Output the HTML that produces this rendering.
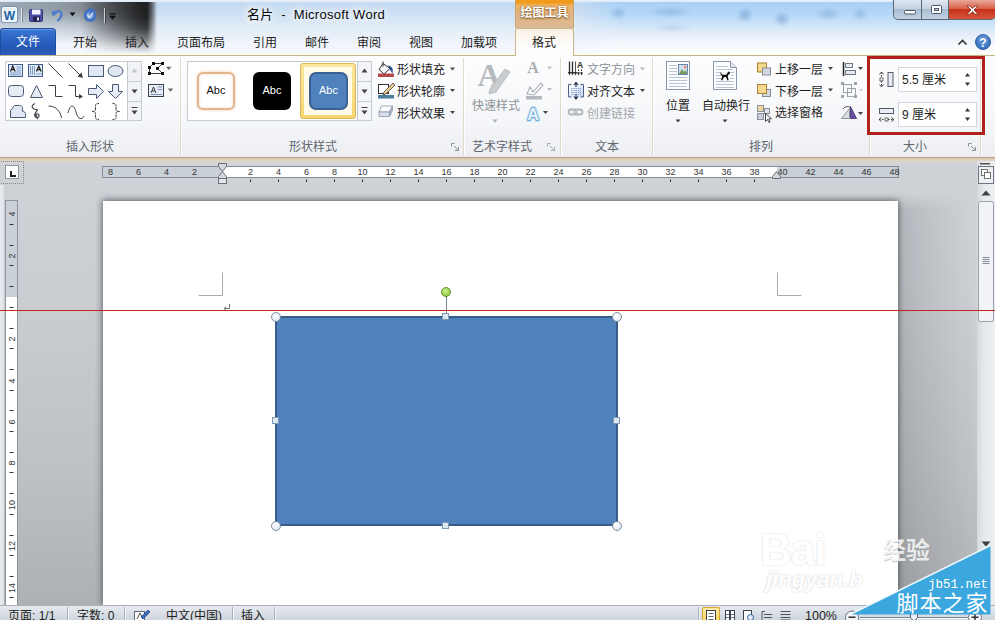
<!DOCTYPE html>
<html lang="zh-CN">
<head>
<meta charset="utf-8">
<title>名片 - Microsoft Word</title>
<style>
*{box-sizing:border-box;margin:0;padding:0}
html,body{width:995px;height:620px;overflow:hidden;background:#c9cdd2}
body{position:relative;font-family:"Liberation Sans","Noto Sans CJK SC",sans-serif;font-size:12px;color:#1e1e1e}
.abs{position:absolute}
/* ---------- title bar ---------- */
#title{left:0;top:0;width:995px;height:55px;background:linear-gradient(180deg,#eaf2fb 0px,#dbe8f6 2px,#c3d9f1 3px,#cfe1f4 14px,#e2ecf8 28px,#eff4fa 42px,#f8fafd 55px)}
#titletext{left:216px;top:4px;width:200px;text-align:center;font-size:13px;color:#0a0a0a;white-space:pre;letter-spacing:.3px;text-shadow:0 0 6px #fff,0 0 10px #fff,0 0 14px #fff}
/* ---------- tab row ---------- */
#tabs{left:560px;top:2px;width:435px;height:52px;background:radial-gradient(ellipse 9px 7px at 58px 11px,rgba(80,130,190,.35),transparent),radial-gradient(ellipse 22px 6px at 110px 10px,rgba(80,130,190,.3),transparent),radial-gradient(ellipse 22px 5px at 112px 26px,rgba(120,160,210,.22),transparent),radial-gradient(ellipse 9px 8px at 185px 13px,rgba(70,120,185,.38),transparent),radial-gradient(ellipse 9px 8px at 222px 17px,rgba(70,120,185,.38),transparent),radial-gradient(ellipse 14px 7px at 268px 12px,rgba(80,130,190,.3),transparent),radial-gradient(ellipse 8px 7px at 300px 12px,rgba(80,130,190,.3),transparent),linear-gradient(180deg,#a7d0f7 0,#b2d6f6 10px,#cbe2f7 22px,#e4eefa 32px,#f5f9fd 43px,#fff 52px);-webkit-mask-image:linear-gradient(90deg,transparent 14px,#000 60px);mask-image:linear-gradient(90deg,transparent 14px,#000 60px)}
.tab{top:33px;font-size:12px;color:#222;white-space:nowrap}
#file{left:0;top:28px;width:56px;height:27px;z-index:2;background:linear-gradient(180deg,#3b78d6 0%,#2c64c4 40%,#2557b3 75%,#2a5fbc 100%);border-radius:3px 4px 0 0;color:#fff;text-align:center;line-height:27px;font-size:12px;border:1px solid #1f4f9f;border-bottom:none;box-shadow:inset 0 1px 0 rgba(255,255,255,.25)}

/* title details */
#darkblob{left:0;top:2px;width:158px;height:42px;background:linear-gradient(90deg,rgba(122,128,132,.55) 0,rgba(120,125,129,.68) 60px,rgba(110,114,117,.85) 100px,rgba(100,104,107,.9) 140px,rgba(100,104,107,.5) 151px,rgba(100,104,107,0) 157px);-webkit-mask-image:linear-gradient(180deg,#000 0,#000 18%,rgba(0,0,0,.38) 60%,transparent 100%);mask-image:linear-gradient(180deg,#000 0,#000 18%,rgba(0,0,0,.38) 60%,transparent 100%)}
#darkblob2{left:80px;top:2px;width:78px;height:52px;background:linear-gradient(90deg,rgba(28,28,29,0) 0,rgba(28,28,29,.5) 32px,rgba(28,28,29,.88) 58px,rgba(24,24,25,.95) 67px,rgba(24,24,25,.55) 71px,rgba(24,24,25,0) 77px);-webkit-mask-image:linear-gradient(180deg,#000 0,#000 28%,rgba(0,0,0,.85) 50%,rgba(0,0,0,.5) 75%,transparent 100%);mask-image:linear-gradient(180deg,#000 0,#000 28%,rgba(0,0,0,.85) 50%,rgba(0,0,0,.5) 75%,transparent 100%)}
#winbtns{left:893px;top:0;width:103px;height:20px;border:1px solid #5a6774;border-top:none;border-radius:0 0 5px 5px;overflow:hidden;background:linear-gradient(180deg,#dfe8f2 0%,#c5d3e2 45%,#a9bcd1 50%,#c3d3e4 100%)}
#winbtns .b{position:absolute;top:0;height:19px;border-right:1px solid #5a6774}
#closebtn{left:55px;width:48px;background:linear-gradient(180deg,#e9a99a 0%,#d9604a 45%,#c7311a 50%,#d8543c 100%);border-right:none}
#ctx{left:515px;top:0;width:59px;height:28px;background:linear-gradient(180deg,#f29a1a 0,#f29a1a 3px,#eeb160 5px,#e2b483 45%,#dcb995 100%);border-left:1px solid #c9a66b;border-right:1px solid #c9a66b;color:#fff;font-size:12px;font-weight:bold;text-align:center;line-height:27px;text-shadow:0 1px 2px #7a5626,0 0 2px #9a6a2a}
#fmt{left:515px;top:28px;width:59px;height:28px;z-index:2;background:linear-gradient(180deg,#fbf1e2 0%,#fdf9f2 35%,#fefefe 70%,#fdfdfe 100%);border:1px solid #c9b68d;border-bottom:none;border-radius:3px 3px 0 0}
/* ---------- ribbon ---------- */
#ribbon{left:0;top:55px;width:995px;height:103px;background:linear-gradient(180deg,#fdfdfe 0%,#f8f9fb 45%,#f1f3f6 80%,#eceef1 100%);border-top:1px solid #c2b691;border-bottom:1px solid #b8a07c;box-shadow:0 -1px 0 rgba(252,248,226,.9)}
.glabel{top:137px;font-size:12px;color:#5f6670;white-space:nowrap;text-align:center}
.gsep{top:58px;width:1px;height:97px;background:#e0dacb;box-shadow:1px 0 0 rgba(255,255,255,.9)}

.gal{background:#fff;border:1px solid #c6cbd3}
.galbtn{position:absolute;left:0;width:100%;border-left:1px solid #c6cbd3;background:linear-gradient(180deg,#fafbfc,#e9ecf1)}
.rt{font-size:12px;white-space:nowrap;color:#1e1e1e;line-height:14px}
.dis{color:#8d9299}
/* ---------- document ---------- */
#doc{left:0;top:158px;width:995px;height:447px;background:linear-gradient(180deg,#cfd3d8 0%,#c9cdd2 35%,#bdc0c4 70%,#aeb1b4 100%)}
#page{left:103px;top:201px;width:795px;height:404px;background:#fff;box-shadow:1px 0 4px rgba(70,75,82,.4),-2px 0 6px rgba(70,75,82,.35),0 -2px 7px rgba(70,75,82,.4)}
#status{left:0;top:605px;width:995px;height:15px;background:linear-gradient(180deg,#e6eaef,#cfd5dd);border-top:1px solid #a9b0ba}

.rnum{position:absolute;top:167px;width:20px;margin-left:-10px;text-align:center;font-size:9px;line-height:11px;color:#333;font-family:"Liberation Sans",sans-serif}
.vnum{position:absolute;left:1px;width:22px;height:12px;margin-top:-6px;text-align:center;font-size:9px;line-height:12px;color:#333;transform:rotate(-90deg);font-family:"Liberation Sans",sans-serif}
.hd{position:absolute;width:7px;height:7px;background:#dbe9f5;border:1px solid #7f99b3}
.hc{position:absolute;width:10px;height:10px;border-radius:50%;background:radial-gradient(circle at 40% 35%,#fff,#d5e4f1);border:1px solid #7f8e9d}
.st{position:absolute;top:609px;font-size:12px;line-height:14px;color:#222;white-space:nowrap}
.ssep{position:absolute;top:607px;width:1px;height:13px;background:#a8afb9;box-shadow:1px 0 0 #f3f5f8}
</style>
</head>
<body>
<div id="title" class="abs"></div>
<div id="titletext" class="abs">名片  -  Microsoft Word</div>
<div id="tabs" class="abs"></div>

<div id="darkblob" class="abs"></div><div id="darkblob2" class="abs"></div>
<div id="file" class="abs">文件</div>
<!-- quick access toolbar -->
<svg class="abs" style="left:0;top:0" width="130" height="28" viewBox="0 0 130 28">
  <rect x="2.500" y="7.500" width="14" height="14" rx="1" fill="#e9f1f9" stroke="#f7fafd"/>
  <rect x="1.500" y="6.500" width="16" height="16" rx="1.500" fill="none" stroke="#6f8fb5" stroke-width=".8"/>
  <text x="9.500" y="19.500" font-family="Liberation Sans,sans-serif" font-size="12" font-weight="bold" fill="#1d62a8" text-anchor="middle">W</text>
  <rect x="21" y="8" width="1" height="14" fill="#dfe4ea"/><rect x="22" y="8" width="1" height="14" fill="#7d8792"/>
  <rect x="29.500" y="9.500" width="13" height="12" rx="1" fill="#4a4fa5" stroke="#34377f"/>
  <rect x="32" y="9.500" width="8.500" height="5" fill="#eef0fa"/>
  <rect x="33" y="16.500" width="7" height="5" fill="#23254f"/>
  <rect x="37" y="17.500" width="2" height="3" fill="#dfe3f3"/>
  <path d="M54 13.500c2 -3.500 7.500 -3 7.500 .8c0 2.500 -1.500 4.500 -3.500 6" fill="none" stroke="#4b7bcb" stroke-width="2.300" stroke-linecap="round"/>
  <path d="M51.500 10.500l1 6l5 -3.500z" fill="#4b7bcb"/>
  <path d="M69.500 12.500h6l-3 3.800z" fill="#111"/>
  <circle cx="90" cy="15.500" r="5" fill="#7ba0d8" stroke="#3f6fc0" stroke-width="2.600"/>
  <path d="M88 8l7.500 1.500l-5 5z" fill="#3f6fc0"/>
  <path d="M87.500 15l2 2.500l3.500 -5" fill="none" stroke="#dfe9f7" stroke-width="1.300"/>
  <rect x="104" y="8" width="1" height="15" fill="#c9ced4"/><rect x="105" y="8" width="1" height="15" fill="#3c4148"/>
  <rect x="109.500" y="13.300" width="6" height="1.300" fill="#111"/>
  <path d="M109 15.800h7l-3.500 4z" fill="#111"/>
</svg>
<div id="winbtns" class="abs">
  <div class="b" style="left:0;width:28px"></div>
  <div class="b" style="left:28px;width:27px"></div>
  <div class="b" id="closebtn"></div>
  <svg style="position:absolute;left:2px;top:0" width="100" height="19" viewBox="0 0 100 19">
    <rect x="8.5" y="10.500" width="11" height="3.500" rx="1" fill="#fff" stroke="#4b5563"/>
    <rect x="35.500" y="5.500" width="10" height="8" rx="1" fill="#fff" stroke="#4b5563"/>
    <rect x="38.500" y="8.500" width="4" height="2" fill="#c9d6e4" stroke="#4b5563"/>
    <path d="M71 6 l3 0 l2.500 2.600 l2.500 -2.600 l3 0 l-4 4 l4 4.200 l-3 0 l-2.500 -2.700 l-2.500 2.700 l-3 0 l4 -4.200 z" fill="#fff" stroke="#7a2416" stroke-width=".8"/>
  </svg>
</div>
<div id="ctx" class="abs">绘图工具</div>
<div id="fmt" class="abs"></div>
<div class="abs tab" style="left:73px">开始</div>
<div class="abs tab" style="left:125px">插入</div>
<div class="abs tab" style="left:177px">页面布局</div>
<div class="abs tab" style="left:253px">引用</div>
<div class="abs tab" style="left:305px">邮件</div>
<div class="abs tab" style="left:357px">审阅</div>
<div class="abs tab" style="left:409px">视图</div>
<div class="abs tab" style="left:461px">加载项</div>
<div class="abs tab" style="left:532px;z-index:3">格式</div>
<!-- help / minimise ribbon -->
<svg class="abs" style="left:955px;top:31px" width="40" height="22" viewBox="0 0 40 22">
  <path d="M3.500 13.500 l4 -4 l4 4" fill="none" stroke="#333" stroke-width="1.600"/>
  <circle cx="28" cy="11" r="7.500" fill="#3f78c4" stroke="#2b5da3"/>
  <circle cx="28" cy="9" r="5.500" fill="#6d9bdb" opacity=".55"/>
  <text x="28" y="15.500" font-family="Liberation Sans,sans-serif" font-size="12" font-weight="bold" fill="#fff" text-anchor="middle">?</text>
</svg>
<div id="ribbon" class="abs"></div>

<!-- ===== group 1: insert shapes ===== -->
<div class="abs gal" style="left:5px;top:61px;width:137px;height:60px"></div>
<svg class="abs" style="left:5px;top:61px" width="137" height="60" viewBox="0 0 137 60" fill="none" stroke="#3b3f46" stroke-width="1">
  <!-- scroll column -->
  <rect x="122.500" y=".5" width="14" height="59" fill="#f1f3f6" stroke="#c6cbd3"/>
  <path d="M122.500 20.500h14M122.500 40.500h14" stroke="#c6cbd3"/>
  <path d="M126.500 11.500h6l-3 -4z" fill="#c3c7cd" stroke="none"/>
  <path d="M126.500 28.500h6l-3 4z" fill="#444" stroke="none"/>
  <path d="M126.500 46.500h6" stroke="#444"/><path d="M126.500 49.500h6l-3 4z" fill="#444" stroke="none"/>
  <!-- row1 -->
  <rect x="3.500" y="3.500" width="14" height="12" fill="#dfe9f5" stroke="#3f5f8a"/><path d="M5.500 10.500l2.300-5.500l2.300 5.500M6.300 8.700h3" stroke="#1b1b1b" stroke-width="1.200"/><path d="M11.500 6h4.500M11.500 8h4.500M11.500 10h4.500M5 12h11M5 13.800h11" stroke="#6a8bbb" stroke-width=".8"/>
  <rect x="23.500" y="3.500" width="14" height="12" fill="#dfe9f5" stroke="#3f5f8a"/><path d="M25.500 5v9M27.500 5v9M29.500 5v9" stroke="#6a8bbb" stroke-width=".8"/><path d="M31.500 10.500l2.300-5.500l2.300 5.500M32.300 8.700h3" stroke="#1b1b1b" stroke-width="1.200"/><path d="M32 12v2M34 12v2M36 12v2" stroke="#6a8bbb" stroke-width=".8"/>
  <path d="M43.500 2.500l14 14"/>
  <path d="M63.500 2.500l13 13"/><path d="M78 17l-5.500 -1.500l4 -4z" fill="#3b3f46" stroke="none"/>
  <rect x="83.500" y="4.500" width="15" height="11" fill="#dfe8f3" stroke="#4a5a72"/>
  <ellipse cx="110.500" cy="10" rx="7.500" ry="5.500" fill="#dfe8f3" stroke="#4a5a72"/>
  <!-- row2 -->
  <rect x="3.500" y="24.500" width="15" height="11" rx="3" fill="#e6ecf5" stroke="#4a5a72"/>
  <path d="M25.500 36.500l6 -12l6 12z" fill="#e6ecf5" stroke="#4a5a72"/>
  <path d="M43.500 24.500h7v11h7"/>
  <path d="M63.500 24.500h7v11h6"/><path d="M78 35.500l-4 -2.500v5z" fill="#3b3f46" stroke="none"/>
  <path d="M83.500 27.500h8v-4l7 7l-7 7v-4h-8z" fill="#e6ecf5" stroke="#4a5a72"/>
  <path d="M107.500 23.500h6v7h4l-7 7l-7 -7h4z" fill="#e6ecf5" stroke="#4a5a72"/>
  <!-- row3 -->
  <path d="M5.500 56.500v-7l4 -5h5c3 0 4 3 2.500 5.500c3 0 4 2.500 3.500 6.500z" fill="#dfe8f3" stroke="#4a5a72"/>
  <path d="M30 42.500c-6 3 -1 6 1 6c4 0 -3 3 -1 7c2 3 6 -1 3 -2.500c-3 -1 -2 4 0 5" stroke-width="1.200"/>
  <path d="M43.500 45c7 0 12 5 13 12"/>
  <path d="M63 52c2 -9 6 -9 8 -1s6 8 8 4"/>
  <path d="M94 42.500c-4.500 0 -3.500 2 -3.500 4.500s0 3.500 -3.500 3.500c3.500 0 3.500 1 3.500 3.500s-1 4.500 3.500 4.500" stroke-dasharray="2.500 .6"/>
  <path d="M107.500 42.500c4.500 0 3.500 2 3.500 4.500s0 3.500 3.500 3.500c-3.500 0 -3.500 1 -3.500 3.500s1 4.500 -3.500 4.500" stroke-dasharray="2.500 .6"/>
</svg>
<!-- edit shape / text box -->
<svg class="abs" style="left:146px;top:60px" width="32" height="40" viewBox="0 0 32 40">
  <path d="M7.500 3.500h9l-5 5l5 5h-13v-6z" fill="none" stroke="#3a3a3a" stroke-width="1"/>
  <g fill="#0c0c0c"><rect x="6" y="2" width="3" height="3"/><rect x="15" y="2" width="3" height="3"/><rect x="10" y="7" width="3" height="3"/><rect x="15" y="12" width="3" height="3"/><rect x="2" y="12" width="3" height="3"/><rect x="2" y="6" width="3" height="3"/></g>
  <path d="M20 6.800h5.500l-2.750 3.200z" fill="#666"/>
  <rect x="2.500" y="24.500" width="15" height="12" fill="#e8eef7" stroke="#3b3f46"/><path d="M5 33l2.500-6l2.500 6M6 31h3" stroke="#222" fill="none" stroke-width=".9"/><path d="M11.500 27h4.500M11.500 29.500h4.500M4.500 34.500h11.500" stroke="#5b78a6" stroke-width=".8"/>
  <path d="M21.800 28.500h5.500l-2.750 3.200z" fill="#666"/>
</svg>
<div class="abs glabel" style="left:60px;width:60px">插入形状</div>
<div class="abs gsep" style="left:180px"></div>
<!-- ===== group 2: shape styles ===== -->
<div class="abs gal" style="left:187px;top:61px;width:185px;height:60px"></div>
<div class="abs" style="left:300px;top:63px;width:56px;height:56px;border:1px solid #d9b65a;border-radius:3px;background:linear-gradient(180deg,#fbe79d,#f6d670)"></div>
<div class="abs" style="left:304px;top:67px;width:48px;height:48px;background:#fffbe8"></div>
<div class="abs" style="left:197px;top:72px;width:38px;height:38px;border:2px solid #e4b58b;border-radius:6px;background:#fff;box-shadow:0 0 3px #ecc9a6,inset 0 0 3px #f3dcc4;font-size:11px;text-align:center;line-height:33px;color:#111">Abc</div>
<div class="abs" style="left:253px;top:72px;width:38px;height:38px;border-radius:6px;background:#000;font-size:11px;text-align:center;line-height:37px;color:#fff">Abc</div>
<div class="abs" style="left:309px;top:72px;width:39px;height:38px;border:2px solid #3a6193;border-radius:7px;background:#4f81bd;font-size:11px;text-align:center;line-height:33px;color:#fff">Abc</div>
<svg class="abs" style="left:357px;top:61px" width="15" height="60" viewBox="0 0 15 60">
  <rect x=".5" y=".5" width="14" height="59" fill="#f3f5f8" stroke="#c6cbd3"/>
  <path d="M.5 20.500h14M.5 40.500h14" stroke="#c6cbd3"/>
  <path d="M4.500 11.500h6l-3 -4z" fill="#444"/>
  <path d="M4.500 28.500h6l-3 4z" fill="#444"/>
  <path d="M4.500 46.500h6" stroke="#444"/><path d="M4.500 49.500h6l-3 4z" fill="#444"/>
</svg>
<!-- fill / outline / effects -->
<svg class="abs" style="left:377px;top:60px" width="20" height="62" viewBox="0 0 20 62">
  <path d="M6 3.500l7 5l-6 5.500l-5 -4.500z" fill="#f4f6fa" stroke="#333" stroke-width="1"/><path d="M6 1.500v5" stroke="#333"/><path d="M11 5.500c4.500 .5 5.500 4 4.500 8c-1.500 -2 -2.500 -4 -3.500 -5.500z" fill="#2f4f8a"/>
  <rect x="1" y="13.500" width="16" height="3.500" fill="#b5484b"/>
  <rect x="1.500" y="24.500" width="10" height="9" fill="#fff" stroke="#333"/><path d="M7 32l9 -9l2 2l-9 9l-3 1z" fill="#e8c88a" stroke="#444" stroke-width=".8"/>
  <rect x="1" y="35" width="16" height="3.500" fill="#4a7f9c"/>
  <path d="M2 52l2.500 -6h11l-3 6z" fill="#fbfcfe" stroke="#8c98ad" stroke-width=".8" stroke-linejoin="round"/><path d="M2 52v4.500h10.500v-4.500z" fill="#d9e0ec" stroke="#8c98ad" stroke-width=".8" stroke-linejoin="round"/><path d="M12.500 56.500l3 -6v-4.500l-3 6z" fill="#a9b6cf" stroke="#8c98ad" stroke-width=".8" stroke-linejoin="round"/>
</svg>
<div class="abs rt" style="left:397px;top:63px">形状填充</div>
<div class="abs rt" style="left:397px;top:85px">形状轮廓</div>
<div class="abs rt" style="left:397px;top:107px">形状效果</div>
<svg class="abs" style="left:448px;top:60px" width="10" height="62" viewBox="0 0 10 62" fill="#444"><path d="M2 7.500h5l-2.500 3z"/><path d="M2 29h5l-2.500 3z"/><path d="M2 51h5l-2.500 3z"/></svg>
<div class="abs glabel" style="left:283px;width:60px">形状样式</div>
<svg class="abs" style="left:451px;top:143px" width="8" height="8" viewBox="0 0 8 8"><path d="M.5 3.500v-3h3" fill="none" stroke="#8a9099"/><path d="M3 3l4 4M7.500 4v3.500h-3.500" fill="none" stroke="#8a9099"/></svg>
<div class="abs gsep" style="left:463px"></div>

<!-- ===== group 3: WordArt styles ===== -->
<svg class="abs" style="left:470px;top:58px" width="90" height="70" viewBox="0 0 90 70">
  <text x="19" y="27.500" font-family="Liberation Serif,serif" font-size="32" font-weight="bold" fill="#b7b9c1" text-anchor="middle">A</text>
  <path d="M20 31l15 -20l5 3l-14 20l-7 2z" fill="#c9ccd1" stroke="#aeb2b8" stroke-width=".8"/>
  <path d="M22.500 61.500h5l-2.500 3z" fill="#a6aab1"/>
  <text x="63" y="15" font-family="Liberation Serif,serif" font-size="16" font-weight="bold" fill="#a9adb3" text-anchor="middle">A</text>
  <path d="M77 8.500h5l-2.500 3z" fill="#b9bcc2"/>
  <path d="M57 36l3 -7l3 5l8 -9l2 2l-9 10z" fill="none" stroke="#a9adb3" stroke-width="1.100"/>
  <rect x="56" y="38" width="16" height="3.500" fill="#b4b7bd"/>
  <path d="M77 30h5l-2.500 3z" fill="#b9bcc2"/>
  <text x="63" y="62" font-family="Liberation Sans,sans-serif" font-size="16" font-weight="bold" fill="#bfe0f4" stroke="#bfe0f4" stroke-width="3.600" stroke-linejoin="round" text-anchor="middle">A</text>
  <text x="63" y="62" font-family="Liberation Sans,sans-serif" font-size="16" font-weight="bold" fill="#e9f4fb" stroke="#5a9fd6" stroke-width="1.300" stroke-linejoin="round" text-anchor="middle" paint-order="stroke">A</text>
  <path d="M73 53h5l-2.500 3z" fill="#444"/>
</svg>
<div class="abs rt dis" style="left:472px;top:99px">快速样式</div>
<div class="abs glabel" style="left:467px;width:70px">艺术字样式</div>
<svg class="abs" style="left:547px;top:143px" width="8" height="8" viewBox="0 0 8 8"><path d="M.5 3.500v-3h3" fill="none" stroke="#a6abb3"/><path d="M3 3l4 4M7.500 4v3.500h-3.500" fill="none" stroke="#a6abb3"/></svg>
<div class="abs gsep" style="left:560px"></div>
<!-- ===== group 4: text ===== -->
<svg class="abs" style="left:566px;top:60px" width="20" height="62" viewBox="0 0 20 62">
  <path d="M3.500 1.500v12M6.500 1.500v12" stroke="#2e2e2e" stroke-width="1.300"/><path d="M9.500 1.500v12" stroke="#555" stroke-width="1"/>
  <path d="M1.800 12l1.700 3.500l1.700 -3.500zM4.800 12l1.700 3.500l1.700 -3.500zM7.800 12l1.700 3.500l1.700 -3.500z" fill="#2e2e2e"/>
  <text x="14" y="8" font-family="Liberation Sans,sans-serif" font-size="8.500" font-weight="bold" fill="#2e2e2e" text-anchor="middle">A</text>
  <path d="M12.500 9.500v4M15.500 9.500v4" stroke="#2e2e2e" stroke-width="1" stroke-dasharray="1.500 1"/><path d="M11 12.500l1.500 3l1.500 -3zM14 12.500l1.500 3l1.500 -3z" fill="#2e2e2e"/>
  <defs><linearGradient id="gal" x1="0" y1="0" x2="1" y2="1"><stop offset="0" stop-color="#fff"/><stop offset="1" stop-color="#c7d7f3"/></linearGradient></defs>
  <rect x="3" y="25" width="14" height="12" fill="url(#gal)"/>
  <path d="M2.500 27v-2.500h3M17.500 27v-2.500h-3M2.500 34.500v2.500h3M17.500 34.500v2.500h-3M2.500 27v7.500M17.500 27v7.500" fill="none" stroke="#4a5f85" stroke-width="1"/>
  <path d="M5 28.500h10M5 30.500h10M5 32.500h10M5 34.500h10" stroke="#7b93c0" stroke-width=".8" stroke-dasharray="1.500 .7"/>
  <path d="M10 22.500v4.500M8 25l2 -2.500l2 2.500M10 39v-4.500M8 36.500l2 2.500l2 -2.500" stroke="#1c2a44" fill="none" stroke-width="1.100"/>
  <rect x="2.500" y="49.500" width="8" height="5" rx="2.500" fill="none" stroke="#b2b5bb" stroke-width="1.800"/><rect x="8.500" y="49.500" width="8" height="5" rx="2.500" fill="none" stroke="#b2b5bb" stroke-width="1.800"/>
  <path d="M6 52h7" stroke="#d6d8dc" stroke-width="1.200"/>
</svg>
<div class="abs rt dis" style="left:587px;top:63px">文字方向</div>
<div class="abs rt" style="left:587px;top:85px">对齐文本</div>
<div class="abs rt dis" style="left:587px;top:107px;color:#a3a7ad">创建链接</div>
<svg class="abs" style="left:638px;top:60px" width="10" height="40" viewBox="0 0 10 40"><path d="M2 7.500h5l-2.500 3z" fill="#b4b7bd"/><path d="M2 29h5l-2.500 3z" fill="#444"/></svg>
<div class="abs glabel" style="left:587px;width:40px">文本</div>
<div class="abs gsep" style="left:652px"></div>
<!-- ===== group 5: arrange ===== -->
<svg class="abs" style="left:664px;top:59px" width="80" height="70" viewBox="0 0 80 70">
  <rect x="2.500" y="2.500" width="23" height="28" fill="#fbfcfe" stroke="#8a97a8"/>
  <path d="M5 6.500h8M5 9.500h8M5 12.500h8M5 15.500h8M5 18.500h18M5 21.500h18M5 24.500h18M5 27.500h18" stroke="#a9b6c8" stroke-width=".8"/>
  <rect x="14.500" y="5.500" width="9" height="10" fill="#cfe0f0" stroke="#4f6d96" stroke-width=".8"/><path d="M15 15l3 -5l2 3l1.500 -2l2 4z" fill="#7d9a5b"/><circle cx="21" cy="8" r="1.200" fill="#e07a50"/>
  <path d="M11.500 60.500h5l-2.500 3z" fill="#444"/>
  <path d="M49.500 2.500h17l6 6v22h-23z" fill="#fbfcfe" stroke="#8a97a8"/><path d="M66.500 2.500v6h6" fill="#e3e8ef" stroke="#8a97a8"/>
  <path d="M52 7.500h12M52 10.500h17M52 13.500h6M52 16.500h5M52 19.500h6M66 13.500h4M67 16.500h3M66 19.500h4M52 22.500h18M52 25.500h18M52 28.500h18" stroke="#a9b6c8" stroke-width=".8"/>
  <path d="M56.300 13.200l2.200 2.600h3.800l2 -3.300l1.800 1l-.9 2l-1 .2l-.5 1.800l1 3.700h-1.400l-1.300 -3.200h-2l-1.600 3.200h-1.400l1.200 -4l-1.500 -1.600z" fill="#0a0a0a"/>
  <path d="M58.500 60.500h5l-2.500 3z" fill="#444"/>
</svg>
<div class="abs rt" style="left:666px;top:99px">位置</div>
<div class="abs rt" style="left:702px;top:99px">自动换行</div>
<svg class="abs" style="left:755px;top:58px" width="20" height="66" viewBox="0 0 20 66">
  <rect x="2.500" y="5" width="9" height="9" fill="#f3d88e" stroke="#a8842c"/><rect x="7.500" y="10" width="8" height="7" fill="#d3d7e0" stroke="#858b96"/>
  <rect x="7.500" y="31.500" width="8" height="7" fill="#d3d7e0" stroke="#858b96"/><rect x="2.500" y="26.500" width="9" height="9" fill="#f3d88e" stroke="#a8842c"/>
  <rect x="2.500" y="47.500" width="6" height="6" fill="#e9d9a0" stroke="#8b8f98"/><rect x="2.500" y="55.500" width="6" height="6" fill="#c9cde0" stroke="#8b8f98"/><rect x="9.500" y="50.500" width="5" height="5" fill="#dfe3ea" stroke="#8b8f98"/>
  <path d="M10.500 55.500l0 8l2 -2l1.500 3l1.200 -.6l-1.500 -3l2.800 -.2z" fill="#fff" stroke="#222" stroke-width=".8"/>
</svg>
<div class="abs rt" style="left:775px;top:63px">上移一层</div>
<div class="abs rt" style="left:775px;top:85px">下移一层</div>
<div class="abs rt" style="left:775px;top:106px">选择窗格</div>
<svg class="abs" style="left:826px;top:58px" width="42" height="66" viewBox="0 0 42 66">
  <path d="M2 9h5l-2.500 3z" fill="#444"/><path d="M2 30.500h5l-2.500 3z" fill="#444"/>
  <path d="M17.500 4v14" stroke="#222" stroke-width="1.500"/><rect x="19.500" y="5.500" width="7" height="4" fill="#e6e9ef" stroke="#6d7684"/><rect x="19.500" y="12.500" width="10" height="4" fill="#e6e9ef" stroke="#6d7684"/>
  <path d="M32 9h5l-2.500 3z" fill="#444"/>
  <rect x="17.500" y="26.500" width="8" height="8" fill="none" stroke="#9da3ad"/><rect x="21.500" y="30.500" width="8" height="8" fill="none" stroke="#9da3ad"/>
  <g fill="#9da3ad"><rect x="15" y="24" width="3" height="3"/><rect x="28" y="24" width="3" height="3"/><rect x="15" y="37" width="3" height="3"/><rect x="28" y="37" width="3" height="3"/></g>
  <path d="M33 31h4l-2 2.500z" fill="#c3c7cd"/>
  <path d="M15.500 60.500l8 0l0 -10z" fill="#d9dce3" stroke="#777c86" stroke-width=".8"/><path d="M24.500 60.500h6l-6 -12z" fill="#6a4fa3" stroke="#3e2f6b" stroke-width=".8"/><path d="M17 51c2 -3 6 -3 8 -1" fill="none" stroke="#333" stroke-width=".8"/>
  <path d="M32 54h5l-2.500 3z" fill="#444"/>
</svg>
<div class="abs glabel" style="left:741px;width:40px">排列</div>
<div class="abs gsep" style="left:869px"></div>
<!-- ===== group 6: size ===== -->
<svg class="abs" style="left:877px;top:66px" width="20" height="62" viewBox="0 0 20 62">
  <rect x="11" y="6.500" width="5" height="14" fill="#e9ecf2" stroke="#555c68"/><path d="M4.500 6v15" stroke="#333" stroke-dasharray="1.500 1.500"/><path d="M2.500 8.500l2 -2.500l2 2.500M2.500 18.500l2 2.500l2 -2.500" fill="none" stroke="#333" stroke-width=".9"/><rect x="3" y="12" width="3" height="3" fill="#fff" stroke="#333" stroke-width=".7"/>
  <rect x="2.500" y="42.500" width="14" height="5" fill="#e9ecf2" stroke="#555c68"/><path d="M2 53.500h15" stroke="#333" stroke-dasharray="1.500 1.500"/><path d="M4.500 51.500l-2.500 2l2.500 2M14.500 51.500l2.500 2l-2.500 2" fill="none" stroke="#333" stroke-width=".9"/><rect x="8" y="52" width="3" height="3" fill="#fff" stroke="#333" stroke-width=".7"/>
</svg>
<div class="abs" style="left:898px;top:67px;width:79px;height:25px;border:1px solid #d3d7dd;background:#fff"></div>
<div class="abs" style="left:898px;top:102px;width:79px;height:25px;border:1px solid #d3d7dd;background:#fff"></div>
<div class="abs rt" style="left:902px;top:73px">5.5 厘米</div>
<div class="abs rt" style="left:902px;top:108px">9 厘米</div>
<svg class="abs" style="left:963px;top:67px" width="10" height="60" viewBox="0 0 10 60" fill="#333"><path d="M2 9.500h5l-2.500 -3.500z"/><path d="M2 15.500h5l-2.500 3.500z"/><path d="M2 44.500h5l-2.500 -3.500z"/><path d="M2 50.500h5l-2.500 3.500z"/></svg>
<div class="abs glabel" style="left:895px;width:40px">大小</div>
<svg class="abs" style="left:968px;top:143px" width="8" height="8" viewBox="0 0 8 8"><path d="M.5 3.500v-3h3" fill="none" stroke="#8a9099"/><path d="M3 3l4 4M7.500 4v3.500h-3.500" fill="none" stroke="#8a9099"/></svg>
<div class="abs gsep" style="left:980px"></div>
<div class="abs" style="left:867px;top:56px;width:118px;height:79px;border:3px solid #b0211c"></div>
<div id="doc" class="abs"></div>
<div class="abs" style="left:898px;top:194px;width:79px;height:411px;background:linear-gradient(90deg,rgba(60,64,70,.20) 0,rgba(60,64,70,.12) 25%,rgba(60,64,70,.03) 70%,rgba(255,255,255,.06) 100%);-webkit-mask-image:linear-gradient(180deg,transparent 0,#000 16px);mask-image:linear-gradient(180deg,transparent 0,#000 16px)"></div>
<div class="abs" style="left:0;top:185px;width:4px;height:420px;background:linear-gradient(90deg,#e9ecf0,#dde1e6)"></div>
<div id="page" class="abs"></div>
<!-- ===== rulers ===== -->
<div class="abs" style="left:0;top:158px;width:995px;height:7px;background:linear-gradient(180deg,#d6c6ab 0,#ddd3c2 30%,#d6d5d3 65%,rgba(207,211,216,0) 100%)"></div>
<div class="abs" style="left:-1px;top:161px;width:25px;height:23px;border:1px dotted #7f868f"></div>
<div class="abs" style="left:5px;top:165px;width:14px;height:14px;border:1px solid #8f959d;background:#fff"></div>
<div class="abs" style="left:10px;top:171px;width:2px;height:5px;background:#222"></div><div class="abs" style="left:10px;top:175px;width:6px;height:2px;background:#222"></div>
<div class="abs" style="left:102px;top:166px;width:797px;height:12px;background:#cad0d7;border:1px solid #868c95"></div>
<div class="abs" style="left:222px;top:167px;width:555px;height:10px;background:#fff"></div>
<div class="rnum" style="left:110.5px">8</div><div class="rnum" style="left:138.5px">6</div><div class="rnum" style="left:166.5px">4</div><div class="rnum" style="left:194.5px">2</div><div class="rnum" style="left:250.5px">2</div><div class="rnum" style="left:278.5px">4</div><div class="rnum" style="left:306.5px">6</div><div class="rnum" style="left:334.5px">8</div><div class="rnum" style="left:362.5px">10</div><div class="rnum" style="left:390.5px">12</div><div class="rnum" style="left:418.5px">14</div><div class="rnum" style="left:446.5px">16</div><div class="rnum" style="left:474.5px">18</div><div class="rnum" style="left:502.5px">20</div><div class="rnum" style="left:530.5px">22</div><div class="rnum" style="left:558.5px">24</div><div class="rnum" style="left:586.5px">26</div><div class="rnum" style="left:614.5px">28</div><div class="rnum" style="left:642.5px">30</div><div class="rnum" style="left:670.5px">32</div><div class="rnum" style="left:698.5px">34</div><div class="rnum" style="left:726.5px">36</div><div class="rnum" style="left:754.5px">38</div><div class="rnum" style="left:782.5px">40</div><div class="rnum" style="left:810.5px">42</div><div class="rnum" style="left:838.5px">44</div><div class="rnum" style="left:866.5px">46</div><div class="rnum" style="left:894.5px">48</div>
<svg class="abs" style="left:0;top:158px" width="995" height="30" viewBox="0 158 995 30">
  <path d="M250.5 179.500v2.500M278.5 179.500v2.500M306.5 179.500v2.500M334.5 179.500v2.500M362.5 179.500v2.500M390.5 179.500v2.500M418.5 179.500v2.500M446.5 179.500v2.500M474.5 179.500v2.500M502.5 179.500v2.500M530.5 179.500v2.500M558.5 179.500v2.500M586.5 179.500v2.500M614.5 179.500v2.500M642.5 179.500v2.500M670.5 179.500v2.500M698.5 179.500v2.500M726.5 179.500v2.500M754.5 179.500v2.500" stroke="#333" fill="none"/>
  <path d="M218.500 163.500h8v3l-4 5l-4 -5z" fill="#d4d6d9" stroke="#6a7079"/>
  <path d="M218.500 178.500v-2l4 -5l4 5v2z" fill="#d4d6d9" stroke="#6a7079"/>
  <rect x="218.500" y="178.500" width="8" height="5" fill="#e4e6e9" stroke="#6a7079"/>
  <path d="M772.500 178.500v-2l4 -5l4 5v2z" fill="#d4d6d9" stroke="#6a7079"/>
</svg>
<div class="abs" style="left:5px;top:200px;width:13px;height:405px;background:#fff;border:1px solid #8d939b;border-bottom:none"></div>
<div class="abs" style="left:6px;top:201px;width:11px;height:96px;background:#cad0d7"></div>
<div class="vnum" style="top:214px">4</div><div class="vnum" style="top:255.5px">2</div><div class="vnum" style="top:339px">2</div><div class="vnum" style="top:380.5px">4</div><div class="vnum" style="top:422px">6</div><div class="vnum" style="top:463px">8</div><div class="vnum" style="top:504.5px">10</div><div class="vnum" style="top:546px">12</div><div class="vnum" style="top:587.5px">14</div>
<svg class="abs" style="left:0;top:200px" width="24" height="405" viewBox="0 200 24 405"><path d="M9.500 224.5h4M9.500 245.5h4M9.500 265.5h4M9.500 286.5h4M9.500 307.5h4M9.500 328.5h4M9.500 348.5h4M9.500 369.5h4M9.500 390.5h4M9.500 410.5h4M9.500 431.5h4M9.500 452.5h4M9.500 472.5h4M9.500 493.5h4M9.500 514.5h4M9.500 535.5h4M9.500 555.5h4M9.500 576.5h4M9.500 597.5h4" stroke="#333" fill="none"/></svg>

<div id="status" class="abs"></div>
<!-- ===== page content ===== -->
<svg class="abs" style="left:190px;top:265px" width="620" height="55" viewBox="190 265 620 55">
  <path d="M198.500 295.500h24v-23" fill="none" stroke="#a9adb3"/>
  <path d="M801.500 295.500h-24v-23" fill="none" stroke="#a9adb3"/>
  <path d="M229.500 304v4.500h-5M226.500 306.500l-2.500 2l2.500 2" fill="none" stroke="#666" stroke-width=".9"/>
</svg>
<div class="abs" style="left:0;top:310px;width:995px;height:1px;background:#c2261e;z-index:5"></div>
<div class="abs" style="left:275px;top:316px;width:343px;height:210px;background:#4f81bd;border:2px solid #385d8a"></div>
<div class="abs" style="left:445.500px;top:296px;width:1px;height:17px;background:#7b8794"></div>
<div class="abs" style="left:441px;top:287px;width:10px;height:10px;border-radius:50%;background:radial-gradient(circle at 40% 35%,#c9f08a,#7fc52f);border:1px solid #5d8f2a"></div>
<div class="hc" style="left:271px;top:312px"></div><div class="hc" style="left:612px;top:312px"></div>
<div class="hc" style="left:271px;top:521px"></div><div class="hc" style="left:612px;top:521px"></div>
<div class="hd" style="left:442px;top:313px"></div><div class="hd" style="left:442px;top:522px"></div>
<div class="hd" style="left:272px;top:417px"></div><div class="hd" style="left:613px;top:417px"></div>
<!-- ===== scrollbar ===== -->
<div class="abs" style="left:977px;top:161px;width:18px;height:444px;background:linear-gradient(90deg,#d5d9de,#e6e9ed 40%,#eceef1)"></div>
<svg class="abs" style="left:977px;top:161px" width="18" height="444" viewBox="0 0 18 444">
  <rect x="3" y="2" width="10" height="1.500" fill="#555"/>
  <rect x="1.500" y="5.500" width="15" height="17" fill="#eef1f4" stroke="#6f767f"/>
  <rect x="4.500" y="8.500" width="6" height="6" fill="#fff" stroke="#555" stroke-width=".8"/><rect x="7.500" y="11.500" width="6" height="6" fill="#fff" stroke="#555" stroke-width=".8"/>
  <path d="M4.500 34.500h9l-4.500 -5z" fill="#3c4047"/>
  <rect x="1.500" y="40.500" width="15" height="120" rx="2" fill="#f1f3f6" stroke="#9aa1ab"/>
  <path d="M5.500 96.500h7M5.500 98.500h7M5.500 100.500h7M5.500 102.500h7" stroke="#858c96"/>
  <path d="M4.500 380.500h9l-4.500 5z" fill="#3c4047"/>
</svg>
<!-- ===== status bar ===== -->
<div class="st" style="left:8px">页面: 1/1</div><div class="ssep" style="left:67px"></div>
<div class="st" style="left:77px">字数: 0</div><div class="ssep" style="left:124px"></div>
<svg class="abs" style="left:132px;top:608px" width="20" height="13" viewBox="0 0 20 13"><rect x="2.500" y="3.500" width="10" height="9" fill="#fff" stroke="#5f6b7c"/><path d="M5 11l3 -6l3 6" fill="none" stroke="#333" stroke-width=".9"/><path d="M9 9l7 -7l2 2l-7 7z" fill="#3b6fc0" stroke="#1d3e78" stroke-width=".7"/></svg>
<div class="st" style="left:166px">中文(中国)</div><div class="ssep" style="left:232px"></div>
<div class="st" style="left:241px">插入</div><div class="ssep" style="left:274px"></div>
<div class="ssep" style="left:698px"></div>
<div class="abs" style="left:702px;top:607px;width:18px;height:13px;border:1px solid #d9a331;border-bottom:none;border-radius:2px 2px 0 0;background:linear-gradient(180deg,#ffe9a6,#ffd362)"></div>
<svg class="abs" style="left:700px;top:607px" width="100" height="13" viewBox="0 0 100 13" fill="none" stroke="#3d434c">
  <rect x="6.500" y="3.500" width="9" height="10" fill="#fff"/><path d="M8.500 6.500h5M8.500 9.500h5M8.500 12.500h5" stroke-width=".8"/>
  <rect x="25.500" y="3.500" width="4" height="10" fill="#fff"/><rect x="30.500" y="3.500" width="4" height="10" fill="#fff"/><path d="M26 7.500h3M31 7.500h3M26 10.500h3M31 10.500h3" stroke-width=".7"/>
  <rect x="43.500" y="3.500" width="8" height="10" fill="#fff"/><circle cx="50.500" cy="10.500" r="3" fill="#dfeaf6" stroke="#2f5f9e"/>
  <path d="M62 4.500h3M64 7.500h8M64 10.500h8M62 4.500v9" stroke-width=".9"/>
  <path d="M80.500 4.500h10M80.500 7.500h10M80.500 10.500h10M80.500 13h10" stroke-width=".9"/>
</svg>
<div class="st" style="left:805px;font-size:12.500px">100%</div>
<svg class="abs" style="left:844px;top:608px" width="140" height="13" viewBox="0 0 140 13">
  <circle cx="8" cy="9.500" r="6.500" fill="#f3f5f8" stroke="#6f767f"/><rect x="4.500" y="8.500" width="7" height="1.500" fill="#333"/>
  <path d="M16 9.500h108" stroke="#7a818b"/><path d="M16 10.500h108" stroke="#fff"/>
  <path d="M66.500 3.500h7v6l-3.500 4l-3.500 -4z" fill="#eef1f5" stroke="#555c66"/>
  <circle cx="131" cy="9.500" r="6.500" fill="#f3f5f8" stroke="#6f767f"/><rect x="127.500" y="8.500" width="7" height="1.500" fill="#333"/><rect x="130.250" y="6" width="1.500" height="7" fill="#333"/>
</svg>
<!-- ===== watermark ===== -->
<div class="abs" style="left:882px;top:538px;font-size:24px;line-height:26px;font-weight:bold;color:rgba(255,255,255,.8);white-space:nowrap;text-shadow:1px 1px 1px rgba(150,154,160,.5)">经验</div>
<div class="abs" style="left:760px;top:526px;font-size:44px;line-height:48px;font-weight:bold;color:#fff;white-space:nowrap;letter-spacing:-1px;text-shadow:0 0 2px rgba(170,175,182,.55);font-family:'Liberation Sans',sans-serif">Bai</div>
<div class="abs" style="left:766px;top:567px;font-size:22px;line-height:26px;font-weight:bold;font-style:italic;color:#fff;white-space:nowrap;text-shadow:0 0 2px rgba(150,156,164,.6);font-family:'Liberation Sans',sans-serif">jingyan.b</div>
<svg class="abs" style="left:845px;top:540px" width="150" height="80" viewBox="845 540 150 80">
  <path d="M851 614.500L990.500 545.500V614.500z" fill="#3ba7de"/>
  <path d="M851 614L990.500 545.500" stroke="#eaf6fd" stroke-width="1.400" fill="none"/>
  <text x="988" y="588" font-family="Liberation Mono,monospace" font-size="12.500" fill="#fff" text-anchor="end">jb51.net</text>
  <text x="988.500" y="610.500" font-family="Liberation Sans,Noto Sans CJK SC,sans-serif" font-size="22" fill="#fff" text-anchor="end" letter-spacing="1">脚本之家</text>
</svg>

</body>
</html>
